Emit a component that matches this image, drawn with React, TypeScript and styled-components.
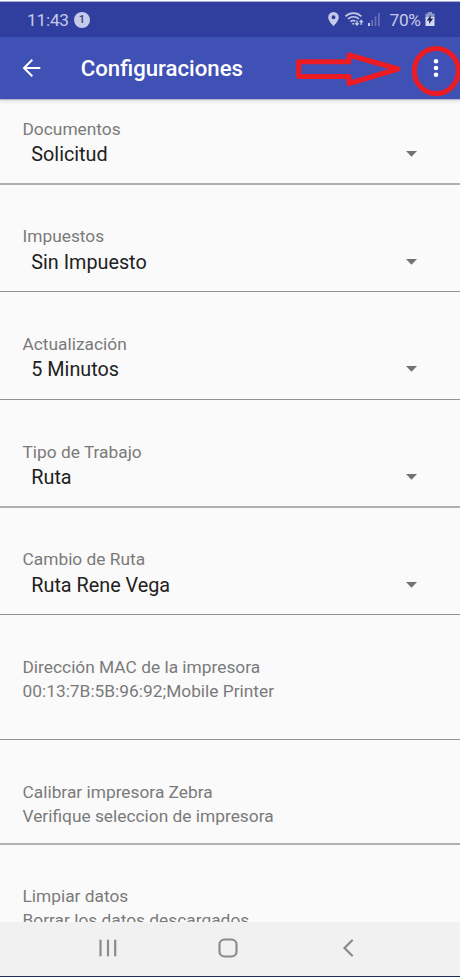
import React from "react";
import styled, { createGlobalStyle } from "styled-components";

const Global = createGlobalStyle`
  * { box-sizing: border-box; }
  body { margin: 0; font-family: Roboto, sans-serif; background: #fafafa; }
`;

const Screen = styled.div`
  width: 460px;
  height: 977px;
  display: flex;
  flex-direction: column;
  overflow: hidden;
  background: #fafafa;
  border-top: 1px solid #fafafa;
`;

const StatusBar = styled.header`
  height: 36px;
  flex: none;
  display: flex;
  align-items: center;
  padding: 1px 25.5px 0 27px;
  background: #303f9f;
  border-top: 1px solid #a9afd2;
  color: #c5cae8;
`;

const Clock = styled.span`
  width: 41px;
  margin-right: 6px;
  font-size: 17.2px;
  letter-spacing: -0.2px;
  white-space: nowrap;
`;

const Count = styled.span`
  width: 16px;
  height: 16px;
  margin: -1px auto 0 0;
  border-radius: 50%;
  background: #c5cae8;
  color: #303b80;
  font-size: 11px;
  font-weight: 500;
  line-height: 16px;
  text-align: center;
`;

const StatusIcons = styled.svg`
  display: block;
  width: 56px;
  height: 20px;
  margin-top: -2px;
`;

const BatteryText = styled.span`
  width: 31px;
  margin: 0 4px 0 6px;
  font-size: 17.3px;
  letter-spacing: -0.3px;
  white-space: nowrap;
`;

const Battery = styled.svg`
  display: block;
  width: 10px;
  height: 16px;
  margin-top: -2px;
`;

const AppBar = styled.div`
  position: relative;
  flex: none;
  height: 62px;
  display: flex;
  align-items: center;
  padding-left: 22px;
  background: #3f51b5;
  color: #fff;
  box-shadow: 0 1px 1px #b5b8c8, 0 2px 5px rgba(0, 0, 0, 0.12);
`;

const BackIcon = styled.svg`
  width: 20px;
  height: 20px;
  margin-right: 38.8px;
`;

const Title = styled.h1`
  margin: 0;
  font-size: 22.2px;
  font-weight: 500;
  line-height: 30px;
`;

const Annotation = styled.svg`
  position: absolute;
  left: 290px;
  top: 4px;
  width: 170px;
  height: 58px;
`;

const Settings = styled.main`
  flex: 1;
  min-height: 0;
  overflow: hidden;
`;

const Row = styled.section<{ $height: number; $top: number; $thick?: boolean }>`
  height: ${(p) => p.$height}px;
  padding: ${(p) => p.$top}px 22.5px 0;
  border-bottom: ${(p) => (p.$thick ? "2px solid #b1b1b1" : "1px solid #919191")};
`;

const Label = styled.div<{ $gap?: number }>`
  margin-bottom: ${(p) => p.$gap ?? 0}px;
  font-size: 17.33px;
  line-height: 24px;
  color: #7a7a7a;
  white-space: nowrap;
`;

const Select = styled.div`
  display: flex;
  align-items: center;
  justify-content: space-between;
  height: 27px;
  padding: 0 20px 0 8.8px;
  font-size: 19.8px;
  line-height: 27px;
  color: #212121;
`;

const Caret = styled.svg`
  width: 11px;
  height: 6px;
  margin: 0 0.5px 2px 0;
`;

const NavBar = styled.nav`
  flex: none;
  height: 55px;
  display: grid;
  grid-template-columns: 120px 120px 120px;
  justify-content: center;
  align-items: center;
  justify-items: center;
  padding: 0 4px 2px 0;
  background: #f1f1f1;
  border-bottom: 1px solid #1c2f52;
`;

const NavIcon = styled.svg`
  width: 22px;
  height: 22px;
  fill: none;
  stroke: #8b8b8b;
  stroke-width: 2.2;
  stroke-linecap: round;
`;

type Setting = {
  label: string;
  value: string;
  height: number;
  top: number;
  gap?: number;
  select?: boolean;
  thick?: boolean;
};

const settings: Setting[] = [
  { label: "Documentos", value: "Solicitud", height: 86, top: 18, select: true, thick: true },
  { label: "Impuestos", value: "Sin Impuesto", height: 107, top: 39, gap: 1, select: true },
  { label: "Actualización", value: "5 Minutos", height: 108, top: 40, select: true },
  { label: "Tipo de Trabajo", value: "Ruta", height: 108, top: 40, select: true, thick: true },
  { label: "Cambio de Ruta", value: "Ruta Rene Vega", height: 107, top: 39, gap: 1, select: true },
  { label: "Dirección MAC de la impresora", value: "00:13:7B:5B:96:92;Mobile Printer", height: 125, top: 40 },
  { label: "Calibrar impresora Zebra", value: "Verifique seleccion de impresora", height: 105, top: 40, thick: true },
  { label: "Limpiar datos", value: "Borrar los datos descargados", height: 105, top: 39 },
];

export default function App() {
  return (
    <>
      <Global />
      <Screen>
        <StatusBar>
          <Clock>11:43</Clock>
          <Count>1</Count>
          <StatusIcons viewBox="0 0 56 20" fill="none" stroke="#c5cae8">
            <path fill="#c5cae8" stroke="none" fillRule="evenodd" d="M5.500 3a5.300 5.300 0 0 0-5.300 5.300c0 3.800 5.300 8.900 5.300 8.900s5.300-5.100 5.300-8.900A5.300 5.300 0 0 0 5.500 3zm0 3.300a2 2 0 1 1 0 4 2 2 0 0 1 0-4z" />
            <path strokeWidth="1.600" d="M17.500 7.300c4.500-4.300 11.300-4.300 15.800 0M20 10c3.300-2.900 7.700-2.900 11 0M22.500 12.700c1.800-1.500 3.500-1.500 4.800-.3" />
            <circle cx="25.300" cy="14.800" r="1" fill="#c5cae8" stroke="none" />
            <path strokeWidth="1.300" d="M29 11.500v4.500M27.400 14.200l1.600 1.800 1.600-1.800M33.200 16v-4.500M31.600 13.300l1.600-1.800 1.600 1.800" />
            <path fill="#c5cae8" stroke="none" d="M40 14h2v3h-2z" />
            <path fill="#6973b8" stroke="none" d="M43.300 11h1.700v6h-1.700zM46.700 7.500h1.700v9.500h-1.700zM50 4h1.700v13H50z" />
          </StatusIcons>
          <BatteryText>70%</BatteryText>
          <Battery viewBox="0 0 10 16">
            <path fill="#8f98cd" d="M3 1h4v1.500h2.500v4h-9v-4H3z" />
            <path fill="#d3d7ef" d="M.5 6h9v9h-9z" />
            <path fill="#182257" d="M5.800 4 1.800 9.500h2.500L4 13l4.200-5.400H5.600z" />
          </Battery>
        </StatusBar>
        <AppBar>
          <BackIcon viewBox="0 0 20 20" fill="none" stroke="#fff" strokeWidth="2">
            <path d="M18.300 10H2.500M10.300 1.800 2 10l8.300 8.200" />
          </BackIcon>
          <Title>Configuraciones</Title>
          <Annotation viewBox="0 0 170 58">
            <g fill="#fff">
              <circle cx="146" cy="20.300" r="2.300" />
              <circle cx="146" cy="27" r="2.300" />
              <circle cx="146" cy="33.800" r="2.300" />
            </g>
            <g fill="none" stroke="#ed1c24" strokeWidth="5" strokeLinejoin="round">
              <path d="M8.700 20.700H59V14l49 14-49 14.500v-7H8.700z" />
              <ellipse cx="146.300" cy="30" rx="22" ry="22.500" />
            </g>
          </Annotation>
        </AppBar>
        <Settings>
          {settings.map((s) => (
            <Row key={s.label} $height={s.height} $top={s.top} $thick={s.thick}>
              <Label $gap={s.gap}>{s.label}</Label>
              {s.select ? (
                <Select>
                  {s.value}
                  <Caret viewBox="0 0 11 6">
                    <path d="M0 0h11L5.500 5.700z" fill="#727272" />
                  </Caret>
                </Select>
              ) : (
                <Label>{s.value}</Label>
              )}
            </Row>
          ))}
        </Settings>
        <NavBar>
          <NavIcon viewBox="0 0 22 22">
            <path d="M3.500 3.500v15M11 3.500v15M18.200 3.500v15" />
          </NavIcon>
          <NavIcon viewBox="0 0 22 22">
            <rect x="2.500" y="2.500" width="17" height="17" rx="5" />
          </NavIcon>
          <NavIcon viewBox="0 0 22 22">
            <path d="M15 3.500 7.500 11l7.500 7.500" />
          </NavIcon>
        </NavBar>
      </Screen>
    </>
  );
}
